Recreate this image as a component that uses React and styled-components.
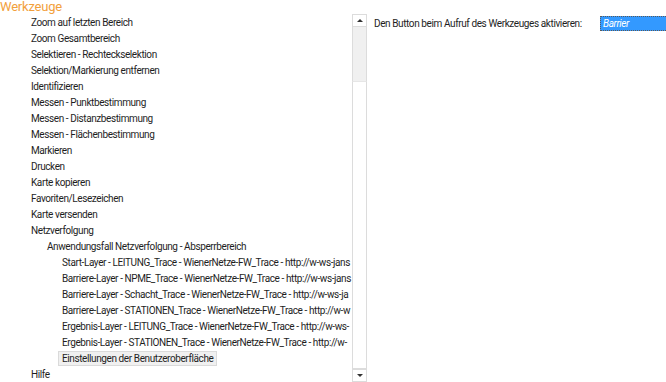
import React from "react";
import styled, { createGlobalStyle } from "styled-components";

const GlobalStyle = createGlobalStyle`
    html, body {
        margin: 0;
        padding: 0;
        background: #ffffff;
        overflow: hidden;
    }
    body {
        font-family: Roboto, "Open Sans", sans-serif;
        font-size: 10px;
        letter-spacing: -0.4px;
        color: #1e1e1e;
    }
`;

const Page = styled.div`
    display: flex;
    width: 666px;
    height: 382px;
    overflow: hidden;
`;

const LeftPane = styled.div`
    width: 367px;
    flex-shrink: 0;
    display: flex;
    flex-direction: column;
`;

const Title = styled.h1`
    margin: 0;
    height: 14px;
    line-height: 13px;
    font-size: 13px;
    font-weight: 400;
    letter-spacing: -0.2px;
    color: #f2a03c;
    white-space: nowrap;
`;

const TreeBox = styled.div`
    flex: 1;
    display: flex;
    min-height: 0;
`;

const TreeList = styled.ul`
    flex: 1;
    margin: 0;
    padding: 0;
    list-style: none;
    overflow: hidden;
`;

const TreeItem = styled.li`
    height: 16px;
    line-height: 16px;
    padding-left: ${(p) => p.$indent}px;
    white-space: nowrap;
    overflow: hidden;
`;

const ItemLabel = styled.span`
    display: inline-block;
    vertical-align: top;
    margin-top: 1px;
    height: 15px;
    line-height: 13px;
    padding: 0 3px;
    margin-left: -3px;
    box-sizing: border-box;
    border: 1px solid ${(p) => (p.$selected ? "#dadada" : "transparent")};
    background: ${(p) => (p.$selected ? "#f0f0f0" : "transparent")};
`;

const ScrollBar = styled.div`
    width: 15px;
    flex-shrink: 0;
    display: flex;
    flex-direction: column;
    box-sizing: border-box;
`;

const ScrollButton = styled.div`
    height: 13px;
    box-sizing: border-box;
    border: 1px solid #dcdcdc;
    background: #ffffff;
    display: flex;
    align-items: center;
    justify-content: center;
    flex-shrink: 0;
`;

const Arrow = styled.div`
    width: 0;
    height: 0;
    border-left: 3px solid transparent;
    border-right: 3px solid transparent;
    ${(p) =>
        p.$down
            ? "border-top: 3px solid #333;"
            : "border-bottom: 3px solid #333;"}
`;

const Thumb = styled.div`
    height: 54px;
    flex-shrink: 0;
    box-sizing: border-box;
    border-left: 1px solid #dcdcdc;
    border-right: 1px solid #dcdcdc;
    background: #f0f0f0;
`;

const Track = styled.div`
    flex: 1;
    box-sizing: border-box;
    border: 1px solid #dcdcdc;
    border-top-color: #e6e6e6;
    background: #ffffff;
`;

const RightPane = styled.div`
    flex: 1;
    display: flex;
    align-items: center;
    align-self: flex-start;
    margin-top: 16px;
    padding-left: 7px;
    min-width: 0;
`;

const FieldLabel = styled.label`
    white-space: nowrap;
    width: 226px;
    flex-shrink: 0;
`;

const Input = styled.div`
    height: 15px;
    line-height: 13px;
    width: 80px;
    flex-shrink: 0;
    box-sizing: border-box;
    border: 1px dotted #5a5a5a;
    background: #3399ff;
    color: #ffffff;
    font-style: italic;
    padding-left: 2px;
`;

const items = [
    { label: "Zoom auf letzten Bereich", level: 1 },
    { label: "Zoom Gesamtbereich", level: 1 },
    { label: "Selektieren - Rechteckselektion", level: 1 },
    { label: "Selektion/Markierung entfernen", level: 1 },
    { label: "Identifizieren", level: 1 },
    { label: "Messen - Punktbestimmung", level: 1 },
    { label: "Messen - Distanzbestimmung", level: 1 },
    { label: "Messen - Flächenbestimmung", level: 1 },
    { label: "Markieren", level: 1 },
    { label: "Drucken", level: 1 },
    { label: "Karte kopieren", level: 1 },
    { label: "Favoriten/Lesezeichen", level: 1 },
    { label: "Karte versenden", level: 1 },
    { label: "Netzverfolgung", level: 1 },
    { label: "Anwendungsfall Netzverfolgung - Absperrbereich", level: 2 },
    { label: "Start-Layer - LEITUNG_Trace - WienerNetze-FW_Trace - http://w-ws-jans", level: 3 },
    { label: "Barriere-Layer - NPME_Trace - WienerNetze-FW_Trace - http://w-ws-jans", level: 3 },
    { label: "Barriere-Layer - Schacht_Trace - WienerNetze-FW_Trace - http://w-ws-ja", level: 3 },
    { label: "Barriere-Layer - STATIONEN_Trace - WienerNetze-FW_Trace - http://w-w", level: 3 },
    { label: "Ergebnis-Layer - LEITUNG_Trace - WienerNetze-FW_Trace - http://w-ws-", level: 3 },
    { label: "Ergebnis-Layer - STATIONEN_Trace - WienerNetze-FW_Trace - http://w-", level: 3 },
    { label: "Einstellungen der Benutzeroberfläche", level: 3, selected: true },
    { label: "Hilfe", level: 1 },
];

const indents = { 1: 30, 2: 46, 3: 61 };

export default function App() {
    return (
        <>
            <GlobalStyle />
            <Page>
                <LeftPane>
                    <Title>Werkzeuge</Title>
                    <TreeBox>
                        <TreeList>
                            {items.map((it) => (
                                <TreeItem key={it.label} $indent={indents[it.level]}>
                                    <ItemLabel $selected={it.selected}>{it.label}</ItemLabel>
                                </TreeItem>
                            ))}
                        </TreeList>
                        <ScrollBar>
                            <ScrollButton>
                                <Arrow />
                            </ScrollButton>
                            <Thumb />
                            <Track />
                            <ScrollButton>
                                <Arrow $down />
                            </ScrollButton>
                        </ScrollBar>
                    </TreeBox>
                </LeftPane>
                <RightPane>
                    <FieldLabel>Den Button beim Aufruf des Werkzeuges aktivieren:</FieldLabel>
                    <Input>Barrier</Input>
                </RightPane>
            </Page>
        </>
    );
}
